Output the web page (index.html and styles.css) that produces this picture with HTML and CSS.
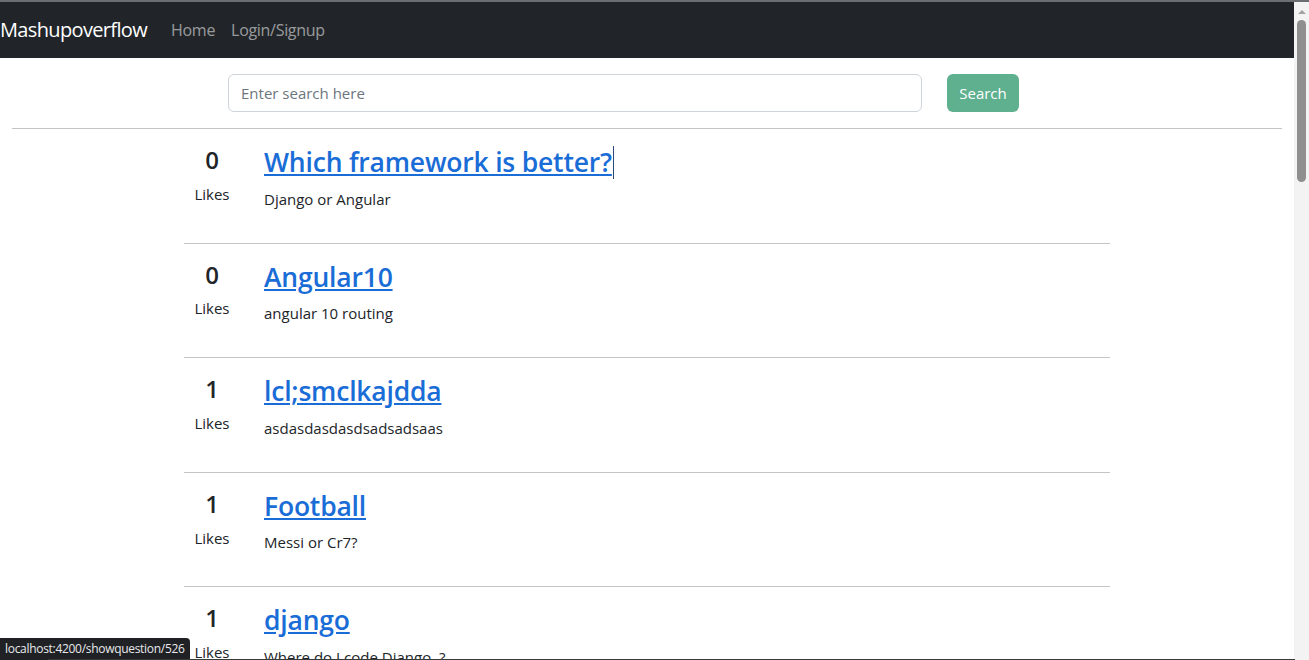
FILE: index.html
```html
<!DOCTYPE html>
<html lang="en">
<head>
<meta charset="utf-8">
<title>Mashupoverflow</title>
<link rel="stylesheet" href="styles.css">
</head>
<body>
<nav class="navbar">
  <a class="brand" href="#">Mashupoverflow</a>
  <a class="nav-link" href="#">Home</a>
  <a class="nav-link" href="#">Login/Signup</a>
</nav>
<main class="page">
  <form class="search">
    <input class="search-input" type="text" placeholder="Enter search here">
    <button class="search-btn" type="button">Search</button>
  </form>
  <hr class="rule">
  <section class="questions">
    <article class="question">
      <div class="likes"><h4 class="count">0</h4><p class="likes-label">Likes</p></div>
      <div class="qbody"><h3 class="qtitle"><a href="#">Which framework is better?</a><span class="caret"></span></h3><p class="qdesc">Django or Angular</p></div>
    </article>
    <hr class="rule">
    <article class="question">
      <div class="likes"><h4 class="count">0</h4><p class="likes-label">Likes</p></div>
      <div class="qbody"><h3 class="qtitle"><a href="#">Angular10</a></h3><p class="qdesc">angular 10 routing</p></div>
    </article>
    <hr class="rule">
    <article class="question">
      <div class="likes"><h4 class="count">1</h4><p class="likes-label">Likes</p></div>
      <div class="qbody"><h3 class="qtitle"><a href="#">lcl;smclkajdda</a></h3><p class="qdesc">asdasdasdasdsadsadsaas</p></div>
    </article>
    <hr class="rule">
    <article class="question">
      <div class="likes"><h4 class="count">1</h4><p class="likes-label">Likes</p></div>
      <div class="qbody"><h3 class="qtitle"><a href="#">Football</a></h3><p class="qdesc">Messi or Cr7?</p></div>
    </article>
    <hr class="rule">
    <article class="question">
      <div class="likes"><h4 class="count">1</h4><p class="likes-label">Likes</p></div>
      <div class="qbody"><h3 class="qtitle"><a href="#">django</a></h3><p class="qdesc">Where do I code Django..?</p></div>
    </article>
    <hr class="rule">
  </section>
</main>
<div class="scrollbar"><span class="arrow"></span><span class="thumb"></span></div>
<div class="status">localhost:4200/showquestion/526</div>
<div class="bottom-edge"></div>
</body>
</html>
```

FILE: styles.css
```css
* { box-sizing: border-box; }
html, body { height: 100%; }
body {
  margin: 0;
  overflow: hidden;
  font-family: "Open Sans", "Noto Sans", sans-serif;
  font-size: 16px;
  line-height: 1.5;
  color: #212529;
  background: #fff;
  border-top: 2px solid #6b6e72;
  padding-right: 15px;
}
.navbar {
  height: 56px;
  background: #212529;
  display: flex;
  align-items: center;
}
.brand {
  color: #fff;
  font-size: 20px;
  text-decoration: none;
  margin-right: 16px;
  letter-spacing: -0.65px;
}
.nav-link {
  color: rgba(255,255,255,.55);
  text-decoration: none;
  padding: 0 8px;
  letter-spacing: -0.3px;
}
.page { padding: 16px 12px 0; }
.search {
  display: flex;
  align-items: center;
  gap: 25px;
  margin-left: 216px;
}
.search-input {
  width: 694px;
  height: 38px;
  border: 1px solid #ced4da;
  border-radius: 6px;
  padding: 6px 12px;
  font-family: inherit;
  font-size: 15px;
  color: #212529;
}
.search-input::placeholder { color: #6c757d; }
.search-btn {
  width: 72px;
  height: 38px;
  border: 0;
  border-radius: 6px;
  background: #5eb08f;
  color: #fff;
  font-family: inherit;
  font-size: 15px;
}
.rule {
  margin: 16px 0;
  border: 0;
  border-top: 1px solid #c4c4c4;
}
.questions {
  width: 926px;
  margin: 0 auto;
}
.question { display: flex; }
.likes {
  width: 56px;
  text-align: center;
  margin-right: 24px;
  padding-top: 1px;
}
.count {
  margin: 0 0 7px;
  font-size: 24px;
  font-weight: 600;
  line-height: 28.8px;
}
.likes-label { margin: 0; font-size: 15px; line-height: 24px; }
.qbody { padding-top: 1px; }
.qtitle {
  margin: 0 0 7px;
  font-size: 26.5px;
  font-weight: 600;
  line-height: 33.6px;
  letter-spacing: -0.2px;
}
.qtitle a { color: #1a6dd6; }
.caret {
  display: inline-block;
  width: 1px;
  height: 33px;
  background: #2b4a7a;
  vertical-align: top;
  margin-left: 1px;
}
.qdesc { margin: 0 0 16px; font-size: 15px; line-height: 24px; }
.scrollbar {
  position: fixed;
  top: 2px;
  right: 0;
  width: 15px;
  bottom: 0;
  background: #f3f3f3;
}
.arrow {
  position: absolute;
  top: 8px;
  left: 4px;
  border-left: 4px solid transparent;
  border-right: 4px solid transparent;
  border-bottom: 4px solid #a3a3a3;
}
.thumb {
  position: absolute;
  top: 18px;
  left: 3px;
  width: 9px;
  height: 162px;
  border-radius: 5px;
  background: #8f8f8f;
}
.status {
  position: fixed;
  left: 0;
  bottom: 0;
  height: 22px;
  padding: 0 5px;
  background: #202124;
  color: #e8eaed;
  font-size: 12px;
  line-height: 22px;
  border-top-right-radius: 4px;
  letter-spacing: -0.3px;
}
.bottom-edge {
  position: fixed;
  left: 48px;
  right: 14px;
  bottom: 0;
  height: 1px;
  background: #3a3a3a;
}
```
